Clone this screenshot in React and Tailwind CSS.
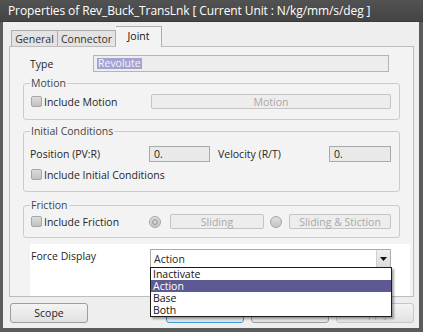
import React from 'react';

const Checkbox = () => (
    <span className="block w-[11px] h-[11px] shrink-0 rounded-[2px] border border-[#a6a6a6] bg-linear-to-b from-[#dcdcdc] to-[#c2c2c2]" />
);

const Radio = ({ checked }) => (
    <span className="flex w-[12px] h-[12px] shrink-0 items-center justify-center rounded-full border border-[#a6a6a6] bg-linear-to-b from-[#dedede] to-[#c6c6c6]">
        {checked && <span className="block w-[6px] h-[6px] rounded-full border border-[#9a9a9a] bg-[#cfcfcf]" />}
    </span>
);

const DisabledButton = ({ width, children }) => (
    <div className={`${width} h-[15px] shrink-0 flex items-center justify-center rounded-[2px] border border-[#c4c4c4] bg-[#ededed] text-[#a9a9a9]`}>
        {children}
    </div>
);

const ValueBox = ({ width, value }) => (
    <div className={`${width} h-[16px] shrink-0 flex items-center pl-[4px] border border-[#a9a9a9] bg-[#e9e9e9] text-[#222]`}>
        {value}
    </div>
);

const Group = ({ title, className, children }) => (
    <fieldset className={`mx-[13px] pl-[6px] pr-[8px] rounded-[3px] border border-[#c5cdd5] ${className}`}>
        <legend className="px-[1px] leading-[16px] text-[#444]">{title}</legend>
        {children}
    </fieldset>
);

const FooterButton = ({ label, variant }) => {
    const styles = {
        normal: 'border-[#9d9d9d] text-[#1e1e1e]',
        focus: 'border-[#3c9ad6] text-[#1e1e1e]',
        disabled: 'border-[#c6c6c6] text-[#b4b4b4]',
    };
    return (
        <button className={`h-[20px] w-[78px] rounded-[3px] border bg-linear-to-b from-[#f4f4f4] to-[#e1e1e1] ${styles[variant]}`}>
            {label}
        </button>
    );
};

const forceOptions = ['Inactivate', 'Action', 'Base', 'Both'];

export default function App() {
    return (
        <div className="w-[423px] h-[332px] flex flex-col bg-[#5b5b5b] font-['Open_Sans',sans-serif] text-[10.5px] leading-[14px] text-[#262626]">
            {/* title bar */}
            <div className="h-[22px] shrink-0 flex items-center pl-[8px] bg-linear-to-b from-[#525252] to-[#444] border-b border-[#3a3a3a] text-white text-[12px] tracking-[-0.1px] whitespace-nowrap">
                Properties of Rev_Buck_TransLnk [ Current Unit : N/kg/mm/s/deg ]
            </div>

            <div className="flex-1 flex flex-col ml-[3px] mr-[4px] mb-[4px] bg-[#eeeeee] pl-[6px] pr-[5px] pt-[4px]">
                {/* tabs */}
                <div className="flex items-end ml-[2px] h-[20px]">
                    <div className="h-[16px] w-[47px] flex items-center justify-center border border-b-0 border-[#adadad] bg-[#e3e3e3] text-[#333]">General</div>
                    <div className="h-[16px] w-[58px] flex items-center justify-center border border-l-0 border-b-0 border-[#adadad] bg-[#e3e3e3] text-[#333]">Connector</div>
                    <div className="relative z-10 -mb-px h-[21px] w-[46px] flex items-start justify-center pt-[2px] border border-l-0 border-b-0 border-[#adadad] bg-[#f3f3f3] text-[#111]">Joint</div>
                </div>

                {/* tab panel */}
                <div className="h-[251px] flex flex-col border border-[#bdbdbd] bg-[#f3f3f3]">
                    <div className="flex items-center mt-[8px] ml-[20px]">
                        <span className="w-[63px]">Type</span>
                        <div className="w-[296px] h-[17px] flex items-center pl-[3px] border border-[#b5b5b5] bg-[#ededed]">
                            <span className="px-[1px] leading-[11px] bg-[#a4a3d0] text-[#f4f4ff]">Revolute</span>
                        </div>
                    </div>

                    <Group title="Motion" className="mt-[3px] pb-[10px]">
                        <div className="flex items-center mt-[3px]">
                            <div className="w-[121px] flex items-center gap-[2px] pl-[1px]">
                                <Checkbox />
                                <span>Include Motion</span>
                            </div>
                            <DisabledButton width="w-[240px]">Motion</DisabledButton>
                        </div>
                    </Group>

                    <Group title="Initial Conditions" className="mt-[3px] pb-[10px]">
                        <div className="flex items-center mt-[7px]">
                            <span className="w-[119px]">Position (PV:R)</span>
                            <ValueBox width="w-[61px]" value="0." />
                            <span className="flex-1 ml-[8px]">Velocity (R/T)</span>
                            <ValueBox width="w-[62px]" value="0." />
                        </div>
                        <div className="flex items-center gap-[2px] pl-[1px] mt-[6px] h-[13px]">
                            <Checkbox />
                            <span>Include Initial Conditions</span>
                        </div>
                    </Group>

                    <Group title="Friction" className="mt-[5px] pb-[8px]">
                        <div className="flex items-center mt-[1px]">
                            <div className="w-[119px] flex items-center gap-[2px] pl-[1px]">
                                <Checkbox />
                                <span>Include Friction</span>
                            </div>
                            <Radio checked />
                            <div className="ml-[9px]">
                                <DisabledButton width="w-[94px]">Sliding</DisabledButton>
                            </div>
                            <div className="ml-[6px]">
                                <Radio />
                            </div>
                            <div className="ml-[7px]">
                                <DisabledButton width="w-[102px]">Sliding &amp; Stiction</DisabledButton>
                            </div>
                        </div>
                    </Group>

                    <div className="flex-1 flex items-start mt-[6px] ml-[20px] mr-[3px] pt-[5px] bg-white">
                        <span className="w-[120px] pl-[1px]">Force Display</span>
                        <div className="relative z-20 w-[241px]">
                            <div className="h-[19px] flex items-center border border-[#ababab] bg-white">
                                <span className="flex-1 pl-[3px]">Action</span>
                                <span className="w-[14px] h-full flex items-center justify-center border-l border-[#d0d0d0] bg-linear-to-b from-[#f0f0f0] to-[#dadada]">
                                    <svg width="7" height="4" viewBox="0 0 7 4">
                                        <path d="M0 0 H7 L3.5 4 Z" fill="#111" />
                                    </svg>
                                </span>
                            </div>
                            <ul className="absolute left-0 top-[18px] w-[242px] border border-[#1c1c1c] bg-white shadow-[2px_2px_2px_rgba(0,0,0,0.35)]">
                                {forceOptions.map((opt) => (
                                    <li
                                        key={opt}
                                        className={`h-[12px] leading-[12px] pl-[2px] ${opt === 'Action' ? 'bg-[#5d5992] text-white' : 'text-[#111]'}`}
                                    >
                                        {opt}
                                    </li>
                                ))}
                            </ul>
                        </div>
                    </div>
                </div>

                {/* footer */}
                <div className="flex items-center mt-[6px] pl-[1px]">
                    <FooterButton label="Scope" variant="normal" />
                    <div className="ml-auto flex gap-[7px]">
                        <FooterButton label="OK" variant="focus" />
                        <FooterButton label="Cancel" variant="normal" />
                        <FooterButton label="Apply" variant="disabled" />
                    </div>
                </div>
            </div>
        </div>
    );
}
